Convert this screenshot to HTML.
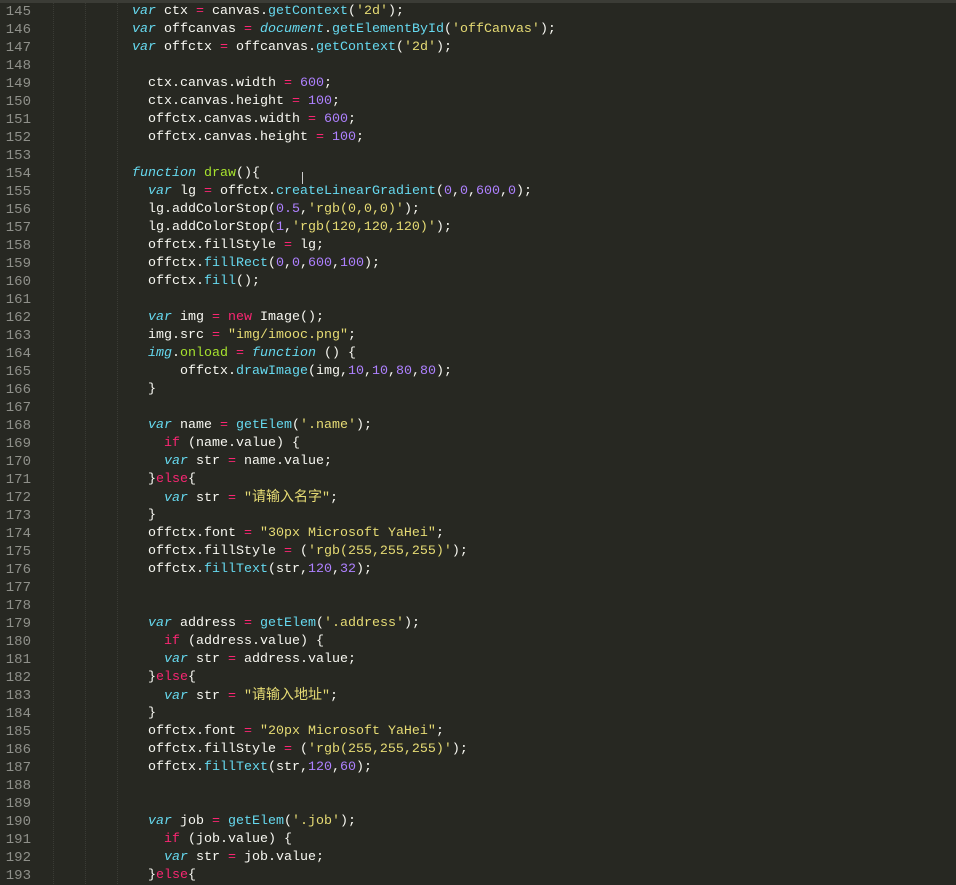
<!DOCTYPE html>
<html><head><meta charset="utf-8"><style>
body{margin:0;width:956px;height:884px;background:#272822;overflow:hidden;position:relative;font-family:"Liberation Mono","Noto Sans CJK SC",monospace;font-size:13.33px;}
.top{position:absolute;left:0;top:0;width:956px;height:3px;background:#3b3c36;}
.g{position:absolute;top:3px;bottom:0;width:0;border-left:1px dotted #3a3b35;}
.ln{position:absolute;left:0;width:31px;text-align:right;color:#8f908a;height:18px;line-height:18px;font-size:14px;}
.c{position:absolute;left:52px;color:#f8f8f2;height:18px;line-height:18px;white-space:pre;}
.k{color:#f92672}.i{color:#66d9ef;font-style:italic}.m{color:#66d9ef}.f{color:#a6e22e}.s{color:#e6db74}.n{color:#ae81ff}
.z{font-family:"Noto Sans CJK SC",sans-serif;font-size:14px;line-height:1;}
.cur{position:absolute;left:302px;top:172px;width:1px;height:12px;background:#ccc;}
</style></head><body>
<div class="top"></div>
<div class="g" style="left:53px"></div><div class="g" style="left:85px"></div><div class="g" style="left:117px"></div>
<div class="cur"></div>
<div class="ln" style="top:3px">145</div><div class="c" style="top:3px">          <span class="i">var</span> ctx <span class="k">=</span> canvas.<span class="m">getContext</span>(<span class="s">'2d'</span>);</div>
<div class="ln" style="top:21px">146</div><div class="c" style="top:21px">          <span class="i">var</span> offcanvas <span class="k">=</span> <span class="i">document</span>.<span class="m">getElementById</span>(<span class="s">'offCanvas'</span>);</div>
<div class="ln" style="top:39px">147</div><div class="c" style="top:39px">          <span class="i">var</span> offctx <span class="k">=</span> offcanvas.<span class="m">getContext</span>(<span class="s">'2d'</span>);</div>
<div class="ln" style="top:57px">148</div>
<div class="ln" style="top:75px">149</div><div class="c" style="top:75px">            ctx.canvas.width <span class="k">=</span> <span class="n">600</span>;</div>
<div class="ln" style="top:93px">150</div><div class="c" style="top:93px">            ctx.canvas.height <span class="k">=</span> <span class="n">100</span>;</div>
<div class="ln" style="top:111px">151</div><div class="c" style="top:111px">            offctx.canvas.width <span class="k">=</span> <span class="n">600</span>;</div>
<div class="ln" style="top:129px">152</div><div class="c" style="top:129px">            offctx.canvas.height <span class="k">=</span> <span class="n">100</span>;</div>
<div class="ln" style="top:147px">153</div>
<div class="ln" style="top:165px">154</div><div class="c" style="top:165px">          <span class="i">function</span> <span class="f">draw</span>(){</div>
<div class="ln" style="top:183px">155</div><div class="c" style="top:183px">            <span class="i">var</span> lg <span class="k">=</span> offctx.<span class="m">createLinearGradient</span>(<span class="n">0</span>,<span class="n">0</span>,<span class="n">600</span>,<span class="n">0</span>);</div>
<div class="ln" style="top:201px">156</div><div class="c" style="top:201px">            lg.addColorStop(<span class="n">0.5</span>,<span class="s">'rgb(0,0,0)'</span>);</div>
<div class="ln" style="top:219px">157</div><div class="c" style="top:219px">            lg.addColorStop(<span class="n">1</span>,<span class="s">'rgb(120,120,120)'</span>);</div>
<div class="ln" style="top:237px">158</div><div class="c" style="top:237px">            offctx.fillStyle <span class="k">=</span> lg;</div>
<div class="ln" style="top:255px">159</div><div class="c" style="top:255px">            offctx.<span class="m">fillRect</span>(<span class="n">0</span>,<span class="n">0</span>,<span class="n">600</span>,<span class="n">100</span>);</div>
<div class="ln" style="top:273px">160</div><div class="c" style="top:273px">            offctx.<span class="m">fill</span>();</div>
<div class="ln" style="top:291px">161</div>
<div class="ln" style="top:309px">162</div><div class="c" style="top:309px">            <span class="i">var</span> img <span class="k">=</span> <span class="k">new</span> Image();</div>
<div class="ln" style="top:327px">163</div><div class="c" style="top:327px">            img.src <span class="k">=</span> <span class="s">"img/imooc.png"</span>;</div>
<div class="ln" style="top:345px">164</div><div class="c" style="top:345px">            <span class="i">img</span>.<span class="f">onload</span> <span class="k">=</span> <span class="i">function</span> () {</div>
<div class="ln" style="top:363px">165</div><div class="c" style="top:363px">                offctx.<span class="m">drawImage</span>(img,<span class="n">10</span>,<span class="n">10</span>,<span class="n">80</span>,<span class="n">80</span>);</div>
<div class="ln" style="top:381px">166</div><div class="c" style="top:381px">            }</div>
<div class="ln" style="top:399px">167</div>
<div class="ln" style="top:417px">168</div><div class="c" style="top:417px">            <span class="i">var</span> name <span class="k">=</span> <span class="m">getElem</span>(<span class="s">'.name'</span>);</div>
<div class="ln" style="top:435px">169</div><div class="c" style="top:435px">              <span class="k">if</span> (name.value) {</div>
<div class="ln" style="top:453px">170</div><div class="c" style="top:453px">              <span class="i">var</span> str <span class="k">=</span> name.value;</div>
<div class="ln" style="top:471px">171</div><div class="c" style="top:471px">            }<span class="k">else</span>{</div>
<div class="ln" style="top:489px">172</div><div class="c" style="top:489px">              <span class="i">var</span> str <span class="k">=</span> <span class="s">"<span class="z">请输入名字</span>"</span>;</div>
<div class="ln" style="top:507px">173</div><div class="c" style="top:507px">            }</div>
<div class="ln" style="top:525px">174</div><div class="c" style="top:525px">            offctx.font <span class="k">=</span> <span class="s">"30px Microsoft YaHei"</span>;</div>
<div class="ln" style="top:543px">175</div><div class="c" style="top:543px">            offctx.fillStyle <span class="k">=</span> (<span class="s">'rgb(255,255,255)'</span>);</div>
<div class="ln" style="top:561px">176</div><div class="c" style="top:561px">            offctx.<span class="m">fillText</span>(str,<span class="n">120</span>,<span class="n">32</span>);</div>
<div class="ln" style="top:579px">177</div>
<div class="ln" style="top:597px">178</div>
<div class="ln" style="top:615px">179</div><div class="c" style="top:615px">            <span class="i">var</span> address <span class="k">=</span> <span class="m">getElem</span>(<span class="s">'.address'</span>);</div>
<div class="ln" style="top:633px">180</div><div class="c" style="top:633px">              <span class="k">if</span> (address.value) {</div>
<div class="ln" style="top:651px">181</div><div class="c" style="top:651px">              <span class="i">var</span> str <span class="k">=</span> address.value;</div>
<div class="ln" style="top:669px">182</div><div class="c" style="top:669px">            }<span class="k">else</span>{</div>
<div class="ln" style="top:687px">183</div><div class="c" style="top:687px">              <span class="i">var</span> str <span class="k">=</span> <span class="s">"<span class="z">请输入地址</span>"</span>;</div>
<div class="ln" style="top:705px">184</div><div class="c" style="top:705px">            }</div>
<div class="ln" style="top:723px">185</div><div class="c" style="top:723px">            offctx.font <span class="k">=</span> <span class="s">"20px Microsoft YaHei"</span>;</div>
<div class="ln" style="top:741px">186</div><div class="c" style="top:741px">            offctx.fillStyle <span class="k">=</span> (<span class="s">'rgb(255,255,255)'</span>);</div>
<div class="ln" style="top:759px">187</div><div class="c" style="top:759px">            offctx.<span class="m">fillText</span>(str,<span class="n">120</span>,<span class="n">60</span>);</div>
<div class="ln" style="top:777px">188</div>
<div class="ln" style="top:795px">189</div>
<div class="ln" style="top:813px">190</div><div class="c" style="top:813px">            <span class="i">var</span> job <span class="k">=</span> <span class="m">getElem</span>(<span class="s">'.job'</span>);</div>
<div class="ln" style="top:831px">191</div><div class="c" style="top:831px">              <span class="k">if</span> (job.value) {</div>
<div class="ln" style="top:849px">192</div><div class="c" style="top:849px">              <span class="i">var</span> str <span class="k">=</span> job.value;</div>
<div class="ln" style="top:867px">193</div><div class="c" style="top:867px">            }<span class="k">else</span>{</div>
</body></html>
